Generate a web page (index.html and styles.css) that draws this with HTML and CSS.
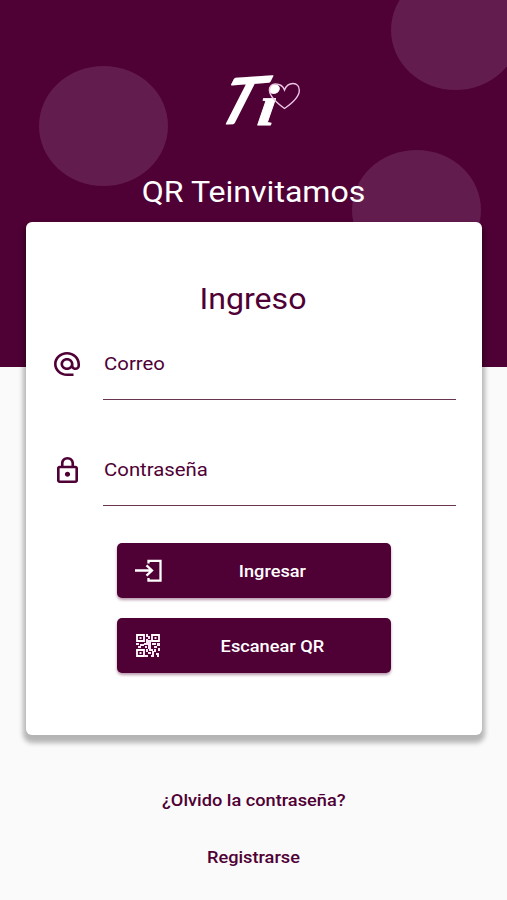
FILE: index.html
```html
<!DOCTYPE html>
<html lang="es">
<head>
<meta charset="utf-8">
<meta name="viewport" content="width=device-width, initial-scale=1">
<title>QR Teinvitamos</title>
<link rel="stylesheet" href="styles.css">
</head>
<body>
<header class="hero">
  <span class="bubble bubble-left"></span>
  <span class="bubble bubble-top"></span>
  <span class="bubble bubble-right"></span>
  <svg class="logo" viewBox="0 0 80 60" aria-label="Ti">
    <text class="logo-t" transform="translate(-9 52.500) rotate(-4) skewX(-31) scale(1.08 1)">T</text>
    <text class="logo-i" transform="translate(36 53) skewX(-8) scale(1.15 1)">i</text>
    <path class="heart" d="M64.500 36.500C57 31 49.500 25 49.500 18.500C49.500 14 52 12 55.500 12C60 12 63 14 64.500 18C66 14 69 11.500 73 11.500C77 11.500 79.300 14.500 79.300 18.500C79.300 25 71 32 64.500 36.500Z"/>
  </svg>
  <h1 class="brand"><span class="wide">QR Teinvitamos</span></h1>
</header>
<main class="card">
  <h2 class="title"><span class="wide">Ingreso</span></h2>
  <form class="form">
    <label class="field">
      <svg class="field-icon at" viewBox="2 1.950 20 20" preserveAspectRatio="none"><path d="M12 1.950c-5.520 0-10 4.480-10 10s4.480 10 10 10h5v-2h-5c-4.340 0-8-3.660-8-8s3.660-8 8-8 8 3.660 8 8v1.430c0 .790-.710 1.570-1.500 1.570s-1.500-.780-1.500-1.570v-1.430c0-2.760-2.240-5-5-5s-5 2.240-5 5 2.240 5 5 5c1.380 0 2.640-.560 3.540-1.470.650.890 1.770 1.470 2.960 1.470 1.970 0 3.500-1.600 3.500-3.570v-1.430c0-5.520-4.480-10-10-10zm0 13c-1.660 0-3-1.340-3-3s1.340-3 3-3 3 1.340 3 3-1.340 3-3 3z"/></svg>
      <span class="input"><span class="wide">Correo</span></span>
    </label>
    <label class="field">
      <svg class="field-icon lock" viewBox="4 1 16 21" preserveAspectRatio="none"><path d="M18 8h-1V6c0-2.760-2.240-5-5-5S7 3.240 7 6v2H6c-1.100 0-2 .9-2 2v10c0 1.100.9 2 2 2h12c1.100 0 2-.9 2-2V10c0-1.100-.9-2-2-2zM9 6c0-1.660 1.340-3 3-3s3 1.340 3 3v2H9V6zm9 14H6V10h12v10zm-6-3c1.100 0 2-.9 2-2s-.9-2-2-2-2 .9-2 2 .9 2 2 2z"/></svg>
      <span class="input"><span class="wide">Contraseña</span></span>
    </label>
    <button class="button" type="button">
      <svg class="button-icon" viewBox="0 0 27 24"><path class="line" d="M13.500 4.500V1.800H25.500V21.700H13.500V19M0 11.500H16.500M11.500 6.300L17 11.500L11.500 16.700"/></svg>
      <span class="button-text"><span class="wide">Ingresar</span></span>
    </button>
    <button class="button" type="button">
      <svg class="button-icon qr" viewBox="0 0 24 23" preserveAspectRatio="none">
        <path class="line" d="M1 1H8V7H1ZM16 1H23V7H16ZM1 16H8V22H1Z"/>
        <path d="M3.500 3h2v2h-2zM18.500 3h2v2h-2zM3.500 18h2v2h-2zM10 0h2v3h-2zM12 2h2v3h-2zM10 5h2v4h-2zM12 6h3v3h-3zM0 9h3v2H0zM4 10h4v2H4zM2 12h3v2H2zM8 9h7v2H8zM9 12h2v2H9zM12 11h3v4h-3zM16 9h4v2h-4zM21 9h3v3h-3zM18 12h3v2h-3zM22 14h2v3h-2zM10 15h2v3h-2zM13 15h4v2h-4zM18 15h2v3h-2zM12 18h3v2h-3zM16 17h2v4h-2zM20 19h3v2h-3zM9 21h3v2H9zM15 21h3v2h-3zM21 21h2v2h-2z"/>
      </svg>
      <span class="button-text"><span class="wide">Escanear QR</span></span>
    </button>
  </form>
</main>
<nav class="links">
  <a class="link"><span class="wide">¿Olvido la contraseña?</span></a>
  <a class="link"><span class="wide">Registrarse</span></a>
</nav>
</body>
</html>
```

FILE: styles.css
```css
* { box-sizing: border-box; }

body {
  margin: 0;
  height: 900px;
  overflow: hidden;
  background: #fafafa;
  color: #4f0035;
  font-family: Roboto, "Liberation Sans", sans-serif;
}

.wide {
  display: inline-block;
  transform: scaleX(1.07);
}

.hero {
  position: relative;
  display: flex;
  flex-direction: column;
  align-items: center;
  height: 367px;
  padding-top: 72px;
  overflow: hidden;
  background: #4f0035;
  color: #fff;
}

.bubble {
  position: absolute;
  width: 129px;
  height: 120px;
  border-radius: 50%;
  background: #631c4e;
}

.bubble-left { left: 39px; top: 66px; }
.bubble-top { left: 391px; top: -30px; }
.bubble-right { left: 352px; top: 150px; }

.logo {
  position: relative;
  width: 80px;
  height: 60px;
  margin-left: 13px;
  overflow: visible;
  fill: #fff;
}

.logo-t {
  font: 400 61px Lato, sans-serif;
  stroke: #fff;
  stroke-width: 2.4;
  stroke-linejoin: round;
}

.logo-i {
  font: italic 700 58px "Liberation Serif", serif;
  stroke: #fff;
  stroke-width: .8;
  stroke-linejoin: round;
}

.heart {
  fill: none;
  stroke: #eec5e6;
  stroke-width: 1.4;
}

.brand, .title {
  position: relative;
  margin: 0;
  font-weight: 400;
  font-size: 30px;
  line-height: 34px;
  text-align: center;
}

.brand { margin-top: 43px; }
.title { margin-right: 4px; }

.card {
  position: relative;
  width: 456px;
  height: 513px;
  margin: -145px 25px 0 26px;
  padding: 60px 26px 0 28px;
  border-radius: 6px;
  background: #fff;
  box-shadow: 0 5px 5px 3px rgba(0, 0, 0, .28);
}

.form { display: flex; flex-direction: column; }

.field {
  display: flex;
  height: 106px;
  font-size: 19px;
  line-height: 22px;
}

.field:first-child { margin-top: 24px; }

.field:nth-child(2) { height: 97px; }

.field-icon { fill: #4f0035; }

.at {
  width: 26px;
  height: 24px;
  margin: 12px 23px 0 0;
}

.lock {
  width: 21px;
  height: 26px;
  margin: 11px 25px 0 3px;
}

.input {
  flex: 1;
  height: 60px;
  padding-top: 13px;
  border-bottom: 1px solid #673451;
}

.input .wide {
  padding-left: 1px;
  transform-origin: left;
}

.button {
  display: flex;
  align-items: center;
  width: 274px;
  height: 55px;
  margin: 0 0 20px 63px;
  padding: 0 18px;
  border: 0;
  border-radius: 5px;
  background: #4f0035;
  box-shadow: 0 2px 3px rgba(79, 0, 53, .4);
  color: #fff;
  font: 500 17px/20px Roboto, sans-serif;
}

.button-icon { width: 27px; height: 24px; fill: #fbe8f6; }
.button-icon.qr { width: 24px; height: 23px; margin: 0 2px 0 1px; }
.line { fill: none; stroke: #fff; stroke-width: 2.3; }
.qr .line { stroke-width: 1.8; }
.button-text { flex: 1; padding-left: 9px; text-align: center; }

.links {
  display: flex;
  flex-direction: column;
  align-items: center;
  gap: 37px;
  padding-top: 55px;
  font-size: 17px;
  font-weight: 500;
  line-height: 20px;
}
```
